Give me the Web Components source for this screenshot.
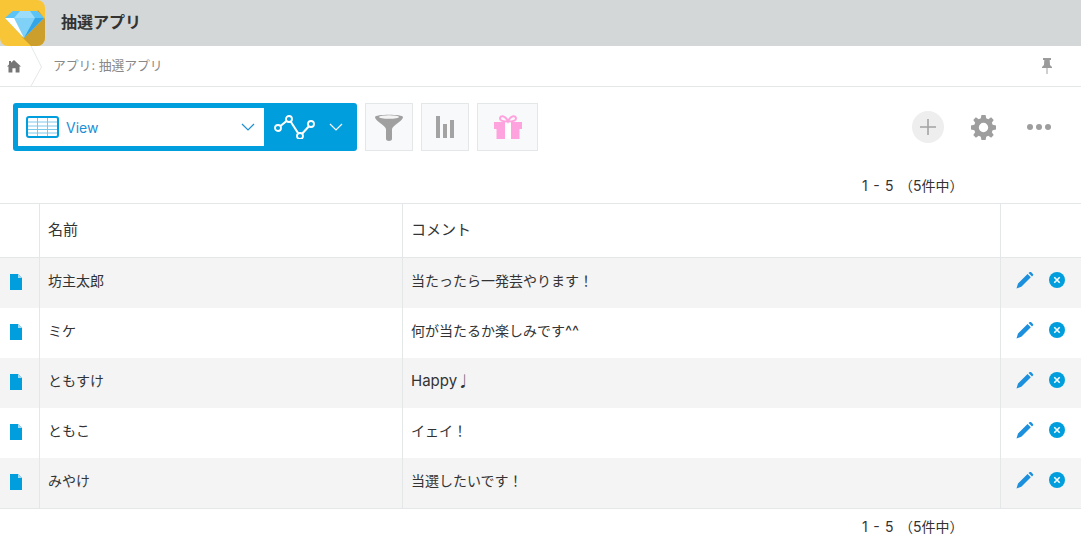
<!doctype html>
<html lang="ja"><head><meta charset="utf-8"><title>抽選アプリ</title>
<style>
html,body{margin:0;padding:0;background:#fff}
body{font:14px Inter,"Noto Sans CJK JP",sans-serif;color:#333;width:1081px;height:541px;overflow:hidden}
</style></head><body>
<app-header>抽選アプリ</app-header>
<app-crumbs>アプリ: 抽選アプリ</app-crumbs>
<view-toolbar></view-toolbar>
<page-count style="--h:52px;--pt:25px">1 - 5 （5件中）</page-count>
<record-table>
  <record-row name="坊主太郎" comment="当たったら一発芸やります！"></record-row>
  <record-row name="ミケ" comment="何が当たるか楽しみです" latin="^^"></record-row>
  <record-row name="ともすけ" latin="Happy" comment="♩" order="latin-first"></record-row>
  <record-row name="ともこ" comment="イェイ！"></record-row>
  <record-row name="みやけ" comment="当選したいです！"></record-row>
</record-table>
<page-count style="--h:32px;--pt:8px">1 - 5 （5件中）</page-count>
<script>
function def(name,html){customElements.define(name,class extends HTMLElement{constructor(){super();this.attachShadow({mode:'open'}).innerHTML=typeof html==='function'?html(this):html}})}
def('app-header',`<style>
:host{display:flex;align-items:center;height:46px;background:#d4d7d7;box-sizing:border-box}
.logo{width:45px;height:46px;flex:none}
.t{margin:0 0 2px 16px;font-weight:700;font-size:16px;color:#333;line-height:44px}
</style>
<svg class="logo" viewBox="0 0 45 46"><path d="M0 0H37a8 8 0 0 1 8 8V38a8 8 0 0 1-8 8H8a8 8 0 0 1-8-8Z" fill="#f8c537"/>
<path d="M45 19 38 10 22 37 31 46H37a8 8 0 0 0 8-8Z" fill="#cc9f2c"/>
<path d="M5 18 13 11H37L44 18 24 38Z" fill="#7fd1f7"/>
<path d="M5 18H14L24 38Z" fill="#fff"/><path d="M35 18H44L24 38Z" fill="#34a6e8"/>
<path d="M13 11H37L44 18H5Z" fill="#5cc3f5"/><path d="M14 18 20 11H30L35 18Z" fill="#9adcfa"/></svg>
<span class="t"><slot></slot></span>`);
def('app-crumbs',`<style>
:host{display:flex;align-items:center;height:41px;border-bottom:1px solid #e3e7e8;box-sizing:border-box;position:relative;font-size:12.800px;color:#888}
.home{width:14px;height:14px;margin-left:7px;flex:none}
.sep{width:13px;height:40px;margin-left:9px;flex:none}
.t{margin-left:10px;position:relative;top:-2px}
.pin{position:absolute;left:1041px;top:11px;width:12px;height:17px}
</style>
<svg class="home" viewBox="0 0 14 14"><path d="M7 1 14 7.500H12.500V13.500H8.600V9.300H5.400V13.500H1.500V7.500H0L2 5.600V2H4V3.800Z" fill="#757575"/></svg>
<svg class="sep" viewBox="0 0 13 40"><path d="M1 0 11.500 21 1 40" fill="none" stroke="#e3e7e8"/></svg>
<span class="t"><slot></slot></span>
<svg class="pin" viewBox="0 0 12 17"><path d="M2 1H10V3H8.700L9 8 11 10V11H1V10L3 8 3.300 3H2Z" fill="#9b9b9b"/><path d="M6 11V17" stroke="#b5b5b5" stroke-width="1.300"/></svg>`);
def('view-toolbar',`<style>
:host{display:flex;height:48px;margin:16px 0 0 13px;align-items:stretch;position:relative}
.sel{width:344px;box-sizing:border-box;background:#009edc;border-radius:3px;padding:5px;display:flex;align-items:center;margin-right:8px}
.w{width:246px;height:38px;background:#fff;display:flex;align-items:center;flex:none}
.w .tb{margin-left:8px;width:33px;height:22px}
.w span{margin-left:7px;color:#1c8fd6;font-size:14px;flex:1}
.w .ch{margin-right:9px}
.ch{width:14px;height:8px}
.b{box-sizing:border-box;height:48px;border:1px solid #e3e7e8;background:#f7f9fa;display:flex;align-items:center;justify-content:center;width:48px;margin-right:8px}
.b.w3{width:61px}
.plus,.gear,.more{position:absolute}
.plus{left:899px;top:8px;width:32px;height:32px;border-radius:50%;background:#eee;display:flex;align-items:center;justify-content:center}
.gear{left:958px;top:12px;width:25px;height:25px}
.more{left:1013px;top:20px;width:26px;height:8px}
</style>
<div class="sel"><div class="w">
<svg class="tb" viewBox="0 0 33 22"><rect x="1" y="1" width="31" height="20" rx="2" fill="#fff" stroke="#009edc" stroke-width="2"/><path d="M2 6H31M2 10H31M2 13.500H31M2 17H31M11.500 2V20M21.500 2V20" stroke="#7cc8ea" stroke-width="1"/></svg>
<span>View</span>
<svg class="ch" viewBox="0 0 14 8"><path d="M1 1 7 7 13 1" fill="none" stroke="#1c8fd6" stroke-width="1.200"/></svg></div>
<svg style="margin-left:10px;width:42px;height:24px" viewBox="0 0 42 24"><path d="M4 13 15 4 26 21 37 9" fill="none" stroke="#fff" stroke-width="2"/><g fill="#009edc" stroke="#fff" stroke-width="1.800"><circle cx="4" cy="13" r="3"/><circle cx="15" cy="4" r="3"/><circle cx="26" cy="21" r="3"/><circle cx="37" cy="9" r="3"/></g></svg>
<svg class="ch" style="margin-left:13px" viewBox="0 0 14 8"><path d="M1 1 7 7 13 1" fill="none" stroke="#fff" stroke-width="1.200"/></svg></div>
<div class="b"><svg width="30" height="30" viewBox="0 0 30 30"><path d="M1 5C1 2 29 2 29 5 29 9 19 13 18 17V27C18 29.500 12 29.500 12 27V17C11 13 1 9 1 5Z" fill="#a0a0a0"/><ellipse cx="15" cy="5" rx="10" ry="1.800" fill="#f4f4f4"/></svg></div>
<div class="b"><svg width="18" height="22" viewBox="0 0 18 22"><path d="M0 0H4V22H0ZM7 8H11V22H7ZM14 4H18V22H14Z" fill="#a3a3a3"/></svg></div>
<div class="b w3"><svg width="28" height="24" viewBox="0 0 28 24"><path d="M0 7H28V14H25.500V24H2.500V14H0Z" fill="#ffa3de"/><path d="M11 7H17V24H11Z" fill="#fff"/><path d="M14 6.500C11 0 6 0 6 3.500 6 6 10 6.500 14 6.500 18 6.500 22 6 22 3.500 22 0 17 0 14 6.500Z" fill="none" stroke="#ffa3de" stroke-width="2"/></svg></div>
<div class="plus"><svg width="16" height="16" viewBox="0 0 16 16"><path d="M8 0V16M0 8H16" stroke="#a3a3a3" stroke-width="1.600"/></svg></div>
<svg class="gear" viewBox="0 0 24 24"><path fill="#9e9e9e" fill-rule="evenodd" d="M10 0H14L14.600 3.200 16.600 4 19.300 2.200 21.800 4.700 20 7.400 20.800 9.400 24 10V14L20.800 14.600 20 16.600 21.800 19.300 19.300 21.800 16.600 20 14.600 20.800 14 24H10L9.400 20.800 7.400 20 4.700 21.800 2.200 19.300 4 16.600 3.200 14.600 0 14V10L3.200 9.400 4 7.400 2.200 4.700 4.700 2.200 7.400 4 9.400 3.200ZM12 7.500A4.500 4.500 0 1 0 12 16.500 4.500 4.500 0 1 0 12 7.500Z"/></svg>
<svg class="more" viewBox="0 0 26 8"><g fill="#9e9e9e"><circle cx="4" cy="4" r="3"/><circle cx="13" cy="4" r="3"/><circle cx="22" cy="4" r="3"/></g></svg>`);
def('page-count',`<style>
:host{display:flex;height:var(--h);box-sizing:border-box;padding:var(--pt) 0 0 862px;font-size:14px;line-height:20px;color:#333;white-space:pre;word-spacing:1.500px}
</style><span><slot></slot></span>`);
def('record-table',`<style>
:host{display:block;border-top:1px solid #e3e7e8;border-bottom:1px solid #e3e7e8}
.h{display:grid;grid-template-columns:40px 363px 598px 80px;height:54px;border-bottom:1px solid #e3e7e8;box-sizing:border-box;line-height:52px;font-size:15px}
.h div{border-right:1px solid #e3e7e8;padding-left:8px;box-sizing:border-box}
.h div:last-child{border-right:0}
::slotted(record-row:nth-child(odd)){background:#f4f4f4}
</style><div class="h"><div></div><div>名前</div><div>コメント</div><div></div></div><slot></slot>`);
def('record-row',el=>{
const l=el.getAttribute('latin'),c=el.getAttribute('comment');
const ls=l?`<span class="l">${l}</span>`:'';
const cm=el.getAttribute('order')==='latin-first'?ls+c:c+ls;
return `<style>
:host{display:grid;grid-template-columns:40px 363px 598px 80px;height:50px;box-sizing:border-box;font-size:14px;line-height:46px;color:#333}
div{border-right:1px solid #e3e7e8;box-sizing:border-box;padding-left:8px}
.l{font-size:15px}
.i{padding:0;display:flex;align-items:center;justify-content:center}
.i svg{margin-right:7px;position:relative;top:-1px}
.a{border:0;padding:0;display:flex;align-items:center}
.a .p{margin-left:15px;position:relative;top:-3px}
.a .x{margin-left:15px;position:relative;top:-3px}
</style>
<div class="i"><svg width="12" height="16" viewBox="0 0 12 16"><path d="M0 0H8L12 4V16H0Z" fill="#009edc"/><path d="M8 0 12 4H8Z" fill="#a6dcf3"/></svg></div>
<div>${el.getAttribute('name')}</div>
<div>${cm}</div>
<div class="a"><svg class="p" width="18" height="18" viewBox="0 0 18 18"><path d="M.5 17.500 2 12.500 11.500 3 14.800 6.300 5.300 15.800ZM12.600 1.900 13.800 1 15 1 17.200 3.200 17.200 4.200 16 5.400Z" fill="#1c90dc"/></svg><svg class="x" width="16" height="16" viewBox="0 0 16 16"><circle cx="8" cy="8" r="8" fill="#009edc"/><path d="M5.300 5.300 10.700 10.700M10.700 5.300 5.300 10.700" stroke="#fff" stroke-width="1.600"/></svg></div>`});
</script>
</body></html>
